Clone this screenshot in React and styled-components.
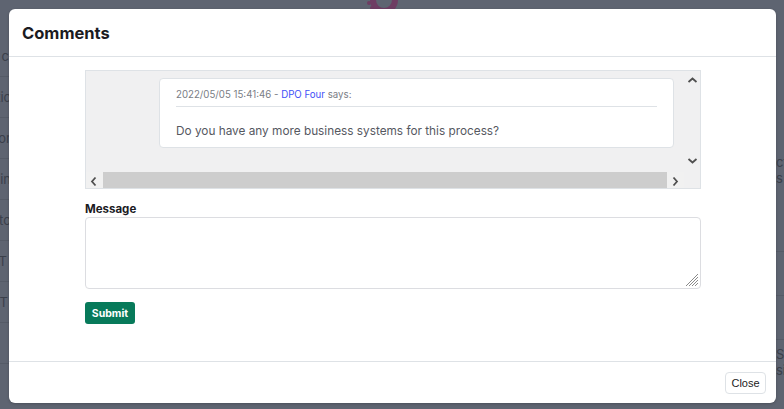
import React from "react";
import styled, { createGlobalStyle } from "styled-components";

const Global = createGlobalStyle`
  html, body { margin: 0; padding: 0; }
  body { font-family: "Inter", "Noto Sans", sans-serif; overflow: hidden; }
`;

const Screen = styled.div`
  position: relative;
  width: 784px;
  height: 409px;
  overflow: hidden;
  background: #5e6471;
`;

// the dimmed page behind the dialog, only its edges show
const Behind = styled.div`
  display: grid;
  grid-template-columns: 11px 1fr 8px;
  height: 100%;
`;

const BehindCol = styled.div`
  display: flex;
  flex-direction: column;
  padding-top: ${(p) => p.top}px;
  overflow: hidden;
`;

const BehindRow = styled.div`
  height: ${(p) => p.h || 41}px;
  flex-shrink: 0;
  border-bottom: ${(p) => (p.line ? "1px solid #555b67" : "none")};
  display: flex;
  flex-direction: column;
  justify-content: center;
  align-items: ${(p) => (p.right ? "flex-start" : "flex-end")};
  color: #3b404b;
  font-size: 13px;
  line-height: 16px;
  box-sizing: border-box;
  padding-right: ${(p) => p.pr || 0}px;
  white-space: nowrap;
`;

const Logo = styled.svg`
  position: absolute;
  left: 360px;
  top: -14px;
`;

const Modal = styled.div`
  position: absolute;
  left: 9px;
  top: 9px;
  width: 767px;
  height: 394px;
  background: #fff;
  border-radius: 6px;
  display: flex;
  flex-direction: column;
  box-shadow: 0 1px 3px rgba(0, 0, 0, 0.2);
`;

const Header = styled.div`
  height: 47px;
  display: flex;
  align-items: center;
  padding: 0 13px;
  border-bottom: 1px solid #dee2e6;
`;

const Title = styled.h5`
  margin: 0;
  font-size: 16.5px;
  font-weight: 700;
  color: #1b1b1f;
`;

const Body = styled.div`
  flex: 1;
  padding: 13px 75px 0 76px;
  display: flex;
  flex-direction: column;
`;

const ScrollBox = styled.div`
  height: 119px;
  box-sizing: border-box;
  border: 1px solid #dee2e6;
  background: #f0f0f1;
  display: grid;
  grid-template-columns: 1fr 16px;
  grid-template-rows: 1fr 16px;
`;

const ScrollContent = styled.div`
  padding: 7px 0 0 73px;
  overflow: hidden;
`;

const Card = styled.div`
  width: 515px;
  box-sizing: border-box;
  background: #fff;
  border: 1px solid #dee2e6;
  border-radius: 4px;
  padding: 8px 16px 6px;
`;

const Meta = styled.div`
  font-size: 9.7px;
  line-height: 16px;
  color: #7a7d85;
  padding-bottom: 3px;
  border-bottom: 1px solid #dee2e6;
`;

const Author = styled.span`
  color: #3f51f7;
`;

const Text = styled.p`
  margin: 14px 0 0;
  font-size: 11.8px;
  line-height: 20px;
  color: #55585f;
`;

const VBar = styled.div`
  display: flex;
  flex-direction: column;
  justify-content: space-between;
  align-items: center;
  padding: 5px 0 7px;
`;

const HBar = styled.div`
  display: flex;
  align-items: center;
  background: #f1f1f1;
`;

const ArrowCell = styled.div`
  width: 17px;
  height: 16px;
  display: flex;
  align-items: center;
  justify-content: center;
`;

const Thumb = styled.div`
  flex: 1;
  height: 16px;
  background: #cdcdcd;
`;

const Corner = styled.div`
  background: #f0f0f1;
`;

const Label = styled.label`
  margin-top: 12px;
  font-size: 11.5px;
  font-weight: 700;
  color: #1b1b1f;
  line-height: 16px;
`;

const AreaWrap = styled.div`
  position: relative;
  height: 72px;
`;

const Area = styled.textarea`
  display: block;
  width: 100%;
  height: 72px;
  box-sizing: border-box;
  border: 1px solid #dcdde1;
  border-radius: 4px;
  resize: none;
  font-family: inherit;
  outline: none;
`;

const Grip = styled.svg`
  position: absolute;
  right: 2px;
  bottom: 2px;
`;

const Row = styled.div`
  margin-top: 13px;
  display: flex;
`;

const SubmitButton = styled.button`
  height: 22px;
  width: 50px;
  padding: 0;
  border: none;
  border-radius: 3px;
  background: #077a5a;
  color: #fff;
  font-family: inherit;
  font-size: 10.5px;
  font-weight: 700;
`;

const Footer = styled.div`
  height: 42px;
  border-top: 1px solid #dee2e6;
  display: flex;
  align-items: center;
  justify-content: flex-end;
  padding: 0 10px 0 0;
  box-sizing: border-box;
`;

const CloseButton = styled.button`
  height: 22px;
  width: 41px;
  padding: 0;
  background: #fff;
  border: 1px solid #dee2e6;
  border-radius: 4px;
  font-family: "Liberation Sans", Arial, sans-serif;
  font-size: 11px;
  color: #222;
`;

const Chevron = ({ dir }) => {
  const pts = {
    up: "0.5,5 4.5,1.5 8.5,5",
    down: "0.5,2 4.5,5.5 8.5,2",
    left: "5.5,0.5 2,4.5 5.5,8.5",
    right: "2.5,0.5 6,4.5 2.5,8.5",
  }[dir];
  return (
    <svg width="9" height="9" viewBox="0 0 9 7" style={{ overflow: "visible" }}>
      <polyline points={pts} fill="none" stroke="#4f4f4f" strokeWidth="1.8" />
    </svg>
  );
};

const leftRows = [
  { t: "c", pr: 2 },
  { t: "tic", pr: 0 },
  { t: "or", pr: 0 },
  { t: "in", pr: 0 },
  { t: "to", pr: 0 },
  { t: "T", pr: 4 },
  { t: "T", pr: 3 },
  { t: "", pr: 0 },
];

const rightRows = [
  { h: 150 },
  { h: 40, t: ["ct", "s"] },
  { h: 62, line: true },
  { h: 44, line: true },
  { h: 44, line: true },
  { h: 44, t: ["S", "si"] },
];

export default function App() {
  return (
    <Screen>
      <Global />
      <Behind>
        <BehindCol top={36}>
          {leftRows.map((r, i) => (
            <BehindRow key={i} pr={r.pr} line>
              {r.t}
            </BehindRow>
          ))}
        </BehindCol>
        <div />
        <BehindCol top={0}>
          {rightRows.map((r, i) => (
            <BehindRow key={i} right h={r.h} line={r.line}>
              {(r.t || []).map((s) => (
                <span key={s}>{s}</span>
              ))}
            </BehindRow>
          ))}
        </BehindCol>
      </Behind>
      <Logo width="40" height="30" viewBox="0 0 40 30">
        <circle cx="24" cy="14" r="11" fill="none" stroke="#6e3d63" strokeWidth="6" />
        <circle cx="9" cy="17" r="2" fill="#6e3d63" />
        <circle cx="12" cy="22" r="2" fill="#6e3d63" />
      </Logo>

      <Modal>
        <Header>
          <Title>Comments</Title>
        </Header>
        <Body>
          <ScrollBox>
            <ScrollContent>
              <Card>
                <Meta>
                  2022/05/05 15:41:46 - <Author>DPO Four</Author> says:
                </Meta>
                <Text>Do you have any more business systems for this process?</Text>
              </Card>
            </ScrollContent>
            <VBar>
              <Chevron dir="up" />
              <Chevron dir="down" />
            </VBar>
            <HBar>
              <ArrowCell>
                <Chevron dir="left" />
              </ArrowCell>
              <Thumb />
              <ArrowCell>
                <Chevron dir="right" />
              </ArrowCell>
            </HBar>
            <Corner />
          </ScrollBox>
          <Label>Message</Label>
          <AreaWrap>
            <Area />
            <Grip width="14" height="14" viewBox="0 0 14 14">
              <g stroke="#8a8a8a" strokeWidth="1">
                <line x1="13" y1="1" x2="1" y2="13" />
                <line x1="13" y1="4" x2="4" y2="13" />
                <line x1="13" y1="7" x2="7" y2="13" />
                <line x1="13" y1="10" x2="10" y2="13" />
              </g>
            </Grip>
          </AreaWrap>
          <Row>
            <SubmitButton>Submit</SubmitButton>
          </Row>
        </Body>
        <Footer>
          <CloseButton>Close</CloseButton>
        </Footer>
      </Modal>
    </Screen>
  );
}
